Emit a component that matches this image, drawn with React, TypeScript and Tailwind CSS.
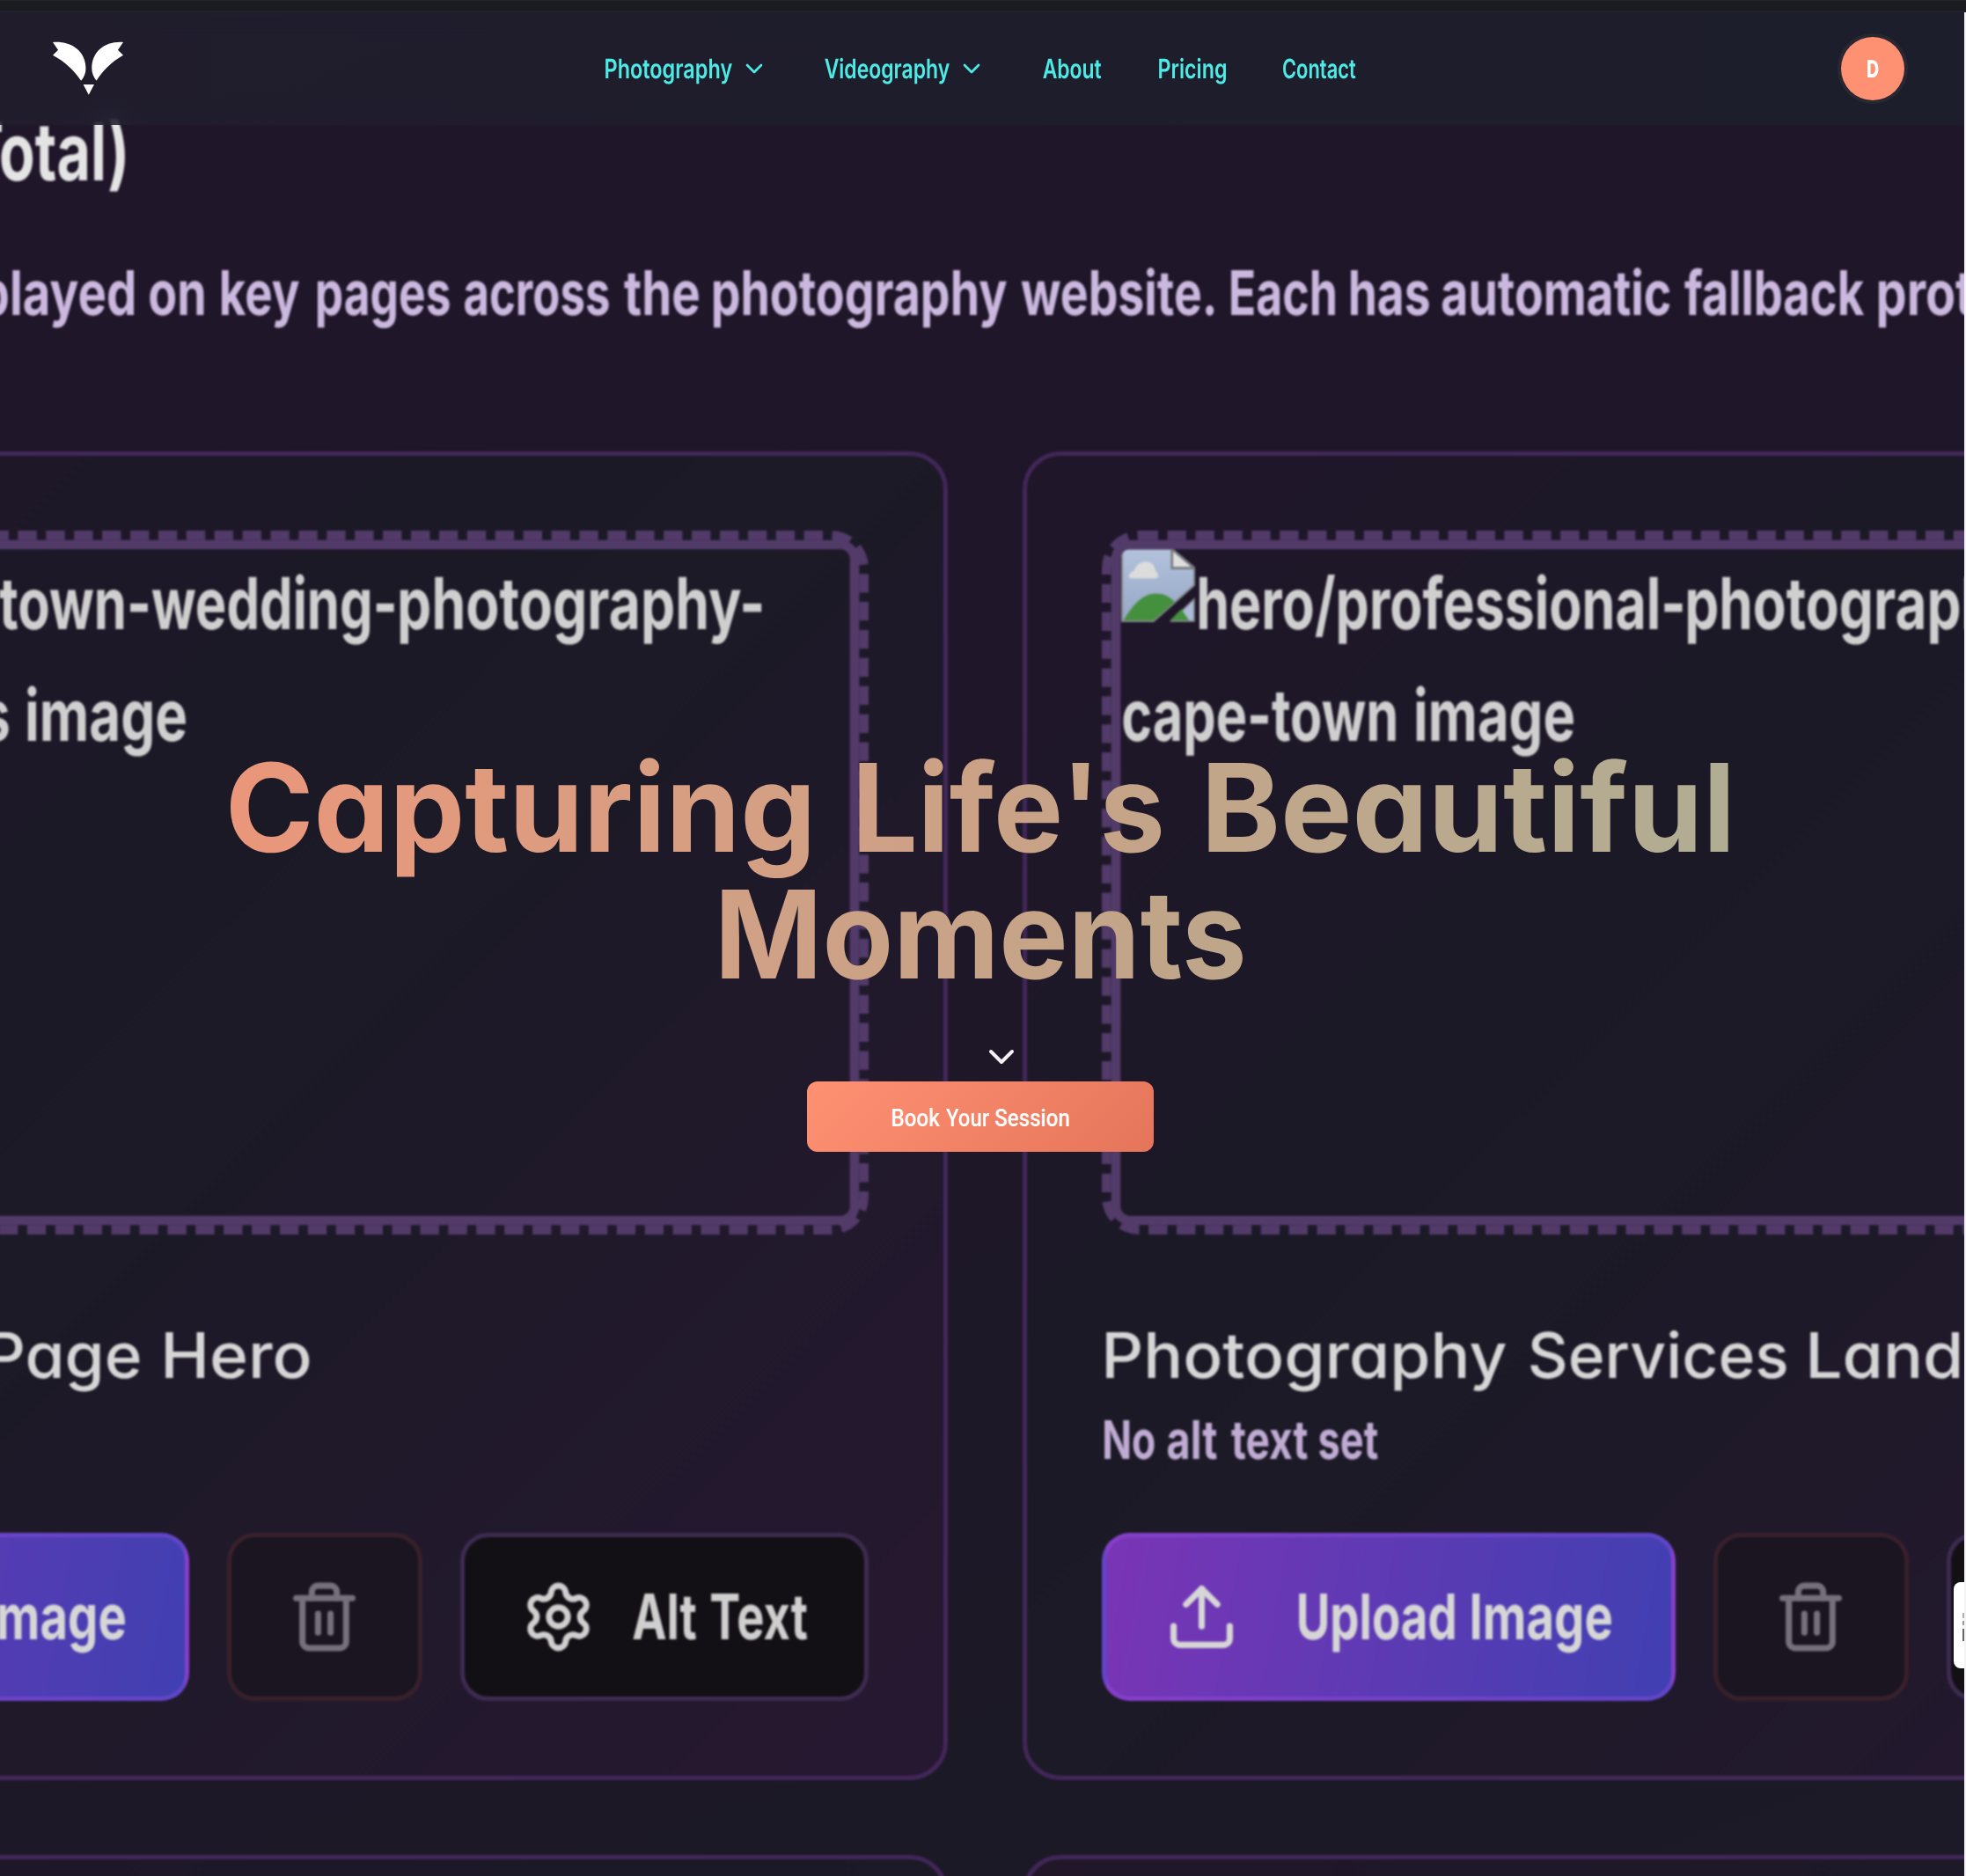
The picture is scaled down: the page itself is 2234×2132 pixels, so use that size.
import { useLayoutEffect, useRef } from "react";
import { ChevronDown, Settings, Trash2, Upload } from "lucide-react";

/** Text whose visible glyphs span exactly `w` pixels. */
function Ink({ w, text, className = "" }: { w: number; text: string; className?: string }) {
  const ref = useRef<HTMLSpanElement>(null);
  useLayoutEffect(() => {
    const el = ref.current;
    if (!el) return;
    const cs = getComputedStyle(el);
    const size = parseFloat(cs.fontSize);
    const ctx = document.createElement("canvas").getContext("2d");
    if (!ctx) return;
    ctx.font = `${cs.fontWeight} 400px ${cs.fontFamily}`;
    const m = ctx.measureText(text);
    const k = size / 400;
    const left = -m.actualBoundingBoxLeft * k;
    const right = (m.width - m.actualBoundingBoxRight) * k;
    const ink = parseFloat(cs.width) - left - right;
    const s = w / ink;
    el.style.transform = `translateX(${-left * s}px) scaleX(${s})`;
  }, [w, text]);
  return (
    <span className="block shrink-0 whitespace-pre" style={{ width: w }}>
      <span ref={ref} className={`inline-block origin-left whitespace-pre ${className}`}>
        {text}
      </span>
    </span>
  );
}

type Span = [text: string, left: number, right: number];

/** A line of words, each with its left and right edge on the page. */
function Line({ from, words, className = "" }: { from: number; words: Span[]; className?: string }) {
  return (
    <div className={`flex whitespace-nowrap ${className}`}>
      {words.map(([text, l, r], i) => (
        <div key={i} className="shrink-0" style={{ marginLeft: l - (i === 0 ? from : words[i - 1][2]) }}>
          <Ink text={text} w={r - l} />
        </div>
      ))}
    </div>
  );
}

function BrokenImage() {
  return (
    <svg viewBox="0 0 16 16" className="mt-px size-[84px] shrink-0">
      <defs>
        <linearGradient id="sky" x1="0" y1="0" x2="0" y2="1">
          <stop offset="0" stopColor="#b3c3dc" />
          <stop offset="1" stopColor="#95a6c6" />
        </linearGradient>
      </defs>
      <path d="M.2.2H11l4.8 4V8L7 15.8H.2z" fill="url(#sky)" stroke="#85878b" strokeWidth=".4" />
      <path d="M15.8 11v4.8h-5z" fill="#a9bbd8" stroke="#85878b" strokeWidth=".3" />
      <path d="M.5 15.6C3.2 11 5.5 9.8 7.6 9.8c1.5 0 2.8.6 4 1.8L7 15.6z" fill="#45903e" />
      <path d="M10.6 15.6 13 13.2l1.7 2.4z" fill="#45903e" />
      <path d="M2.2 6.5c-.8 0-.8-1 .6-1.7C3.5 3.4 4.3 2.9 5.4 2.9c1.2 0 1.9.8 2 2 .7.4.8 1.6.2 1.6z" fill="#dcdcdc" />
      <path d="M11 .2v4.1h4.8z" fill="#dedede" stroke="#77787b" strokeWidth=".5" />
    </svg>
  );
}

function Card({
  left,
  frame,
  title,
  alt,
}: {
  left: number;
  frame: Span[][];
  title: Span[];
  alt: Span[];
}) {
  const inner = left + 90;
  const media = inner + 21.5;
  return (
    <div className="w-[1604px] shrink-0 rounded-[43px] border-[5px] border-[#422759] bg-linear-[135deg] from-[#20162a] via-[#1b1a26] via-45% to-[#271831] p-[85px]">
      <div className="relative h-[801px] pt-[20.5px] pl-[21.5px]">
        <div className="absolute top-0 left-0 h-[300px] w-[534px] origin-top-left scale-[2.6667] rounded-2xl border-4 border-dashed border-[#523a69]">
          <div className="h-full rounded-lg border-4 border-[#523a69]" />
        </div>
        <div className="-mt-px text-[81.5px] leading-[127px] font-bold text-[#cfcfcf]">
          <div className="flex">
            <BrokenImage />
            <Line from={media + 84} words={frame[0]} />
          </div>
          <Line from={media} words={frame[1]} />
        </div>
      </div>
      <Line
        from={inner}
        words={title}
        className="mt-[84.5px] h-[106px] text-[71.5px] leading-[106px] font-medium text-[#d6d6d6] [font-feature-settings:'cv11']"
      />
      <Line
        from={inner}
        words={alt}
        className="-mt-[1.5px] h-[86px] text-[60.6px] leading-[86px] font-bold text-[#c0abd3]"
      />
      <div className="mt-[63px] flex h-[191px] gap-[43px] text-[71.5px] font-bold">
        <div className="flex min-w-0 flex-1 items-center rounded-[32px] border-[5px] border-[#a855f7]/30 bg-linear-[100deg] from-[#7a35b6] to-[#4040b2] pl-[66px] text-[#d6d6d6]">
          <Upload className="size-[85px] shrink-0" />
          <div className="mt-[2px] ml-[68px] flex gap-5 leading-[106px]">
            <Ink text="Upload" w={177} />
            <Ink text="Image" w={158} />
          </div>
        </div>
        <div className="flex w-[221.5px] shrink-0 items-center justify-center rounded-[32px] border-[5px] border-[#38202b] bg-[#1a1520] text-[#75707c]">
          <Trash2 className="size-[85px]" />
        </div>
        <div className="flex w-[464.5px] shrink-0 items-center rounded-[32px] border-[5px] border-[#3d2b50] bg-[#131015] pl-[64px] text-[#cfcfcf]">
          <Settings className="size-[85px] shrink-0" />
          <div className="mt-[2px] ml-[42px] flex gap-[17px] leading-[106px]">
            <Ink text="Alt" w={72.5} />
            <Ink text="Text" w={109.5} />
          </div>
        </div>
      </div>
    </div>
  );
}

const LEFT = -527;
const RIGHT = 1162;

function Backdrop() {
  return (
    <div className="absolute inset-y-0 left-0 w-[2232px] overflow-hidden bg-linear-[160deg] from-[#20162a] via-[#1e1728] to-[#1b1a26]">
      <div className="-ml-[527px] w-[3293px] pt-[108px] blur-[0.9px]">
        <Line
          from={LEFT}
          words={[["Total)", -38, 142]]}
          className="h-[128px] text-[91px] leading-[128px] font-bold text-[#e4e4e4]"
        />
        <Line
          from={LEFT}
          words={[
            ["played", -20, 152.5],
            ["on", 170, 231.5],
            ["key", 252, 340],
            ["pages", 361, 511],
            ["across", 528, 692],
            ["the", 709, 794],
            ["photography", 811, 1144],
            ["website.", 1160, 1380],
            ["Each", 1399, 1517],
            ["has", 1535, 1624],
            ["automatic", 1639, 1898],
            ["fallback", 1914, 2118],
            ["protection.", 2135, 2427],
          ]}
          className="mt-[43.5px] h-[106px] text-[70px] leading-[106px] font-bold text-[#cbb8de]"
        />
        <div className="mt-[127px] flex gap-[85px]">
          <Card
            left={LEFT}
            frame={[
              [
                ["hero/cape-", -331, -20],
                ["town-wedding-", -1, 448],
                ["photography-", 454.5, 865],
              ],
              [
                ["services", -230, 10],
                ["image", 31, 211],
              ],
            ]}
            title={[
              ["Page", -12, 158.6],
              ["Hero", 188, 351.6],
            ]}
            alt={[]}
          />
          <Card
            left={RIGHT}
            frame={[
              [
                ["hero/professional-", 1363, 1912],
                ["photography-", 1918, 2326],
              ],
              [
                ["cape-town", 1276.3, 1586],
                ["image", 1609, 1788],
              ],
            ]}
            title={[
              ["Photography", 1257, 1711.5],
              ["Services", 1739, 2030],
              ["Land", 2057, 2226],
            ]}
            alt={[
              ["No", 1254.7, 1311.5],
              ["alt", 1327, 1383],
              ["text", 1398.6, 1485.6],
              ["set", 1499, 1566],
            ]}
          />
        </div>
        <div className="mt-[85px] flex h-64 gap-[85px]">
          <div className="w-[1604px] shrink-0 rounded-[43px] border-[5px] border-[#422759] bg-linear-to-r from-[#20162a] to-[#1b1a26]" />
          <div className="w-[1604px] shrink-0 rounded-[43px] border-[5px] border-[#422759] bg-linear-to-r from-[#211729] to-[#1b1a26]" />
        </div>
      </div>
    </div>
  );
}

function Logo() {
  return (
    <svg viewBox="0 0 80 60" className="h-[60px] w-20 overflow-visible" fill="#fff">
      <path d="M0 0C20-1.5 37.5 9 37.5 30C37.5 35 35.5 40 32.1 43.7C25 33 14 22 0 14.7L6 8.7Z" />
      <path d="M80 0C60-1.5 44.3 10 44.3 30C44.3 35 46.5 40 49.6 43.7C56 33 67 22 80 14.7L74 8.7Z" />
      <path d="M34.6 48H47L40.8 59.7Z" />
    </svg>
  );
}

function Header() {
  return (
    <header className="relative z-20">
      <div className="h-3 border-t border-[#232429] bg-[#1b1c1f]" />
      <div className="h-0.5 bg-[#22222b]" />
      <div className="mr-0.5 flex h-32 items-center bg-linear-to-r from-[#201f2e]/75 to-[#1d212c]/75 pl-[60px] backdrop-blur-md">
        <div className="w-[627.5px]">
          <Logo />
        </div>
        <nav className="mt-0.5 flex items-center text-[30.5px] leading-none font-semibold text-[#4eeae5]">
          <Ink text="Photography" w={144} />
          <ChevronDown className="-mt-0.5 ml-[9.5px] size-8" />
          <div className="ml-[63.5px] flex items-center">
            <Ink text="Videography" w={142} />
            <ChevronDown className="-mt-0.5 ml-[9px] size-8" />
          </div>
          <div className="ml-[65px] flex gap-[65.5px]">
            <Ink text="About" w={66.5} />
            <Ink text="Pricing" w={76} />
            <Ink text="Contact" w={82.5} />
          </div>
        </nav>
        <div className="mr-[64px] ml-auto flex size-20 items-center justify-center rounded-full bg-[#2b2732]">
          <div className="flex size-[72px] items-center justify-center rounded-full bg-[#ff9173] text-[27px] leading-none font-extrabold text-white">
            <Ink text="D" w={12.5} />
          </div>
        </div>
      </div>
    </header>
  );
}

const glyphs = "bg-clip-text text-transparent bg-linear-to-r py-8 -my-8";

function Hero() {
  return (
    <section className="relative z-10 flex flex-col">
      <h1 className="mt-[704px] text-[139px] leading-[144px] font-bold [font-feature-settings:'cv11']">
        <span className="flex pl-[260px]">
          <Ink text="Capturing" w={660} className={`${glyphs} from-[#ea967a] to-[#d2a084]`} />
          <span className="w-14" />
          <Ink text="Life's" w={344} className={`${glyphs} from-[#d0a085] to-[#c3a488]`} />
          <span className="w-[53px]" />
          <Ink text="Beautiful" w={592} className={`${glyphs} from-[#c2a589] to-[#b0ad93]`} />
        </span>
        <span className="flex pl-[820px]">
          <Ink text="Moments" w={593} className={`${glyphs} from-[#d1a085] to-[#bda68a]`} />
        </span>
      </h1>
      <div className="mt-[43px] ml-[1114px] h-12 w-12 text-[#f2f0f2]">
        <ChevronDown className="size-12" />
      </div>
      <button className="mt-[4px] ml-[917px] flex h-20 w-[394px] items-center justify-center gap-[7px] rounded-xl bg-linear-[135deg] from-[#ff9173] to-[#e5755a] pt-[3px] font-['Roboto',sans-serif] text-[28px] leading-none font-medium text-white">
        <Ink text="Book" w={54} />
        <Ink text="Your" w={49} />
        <Ink text="Session" w={83.5} />
      </button>
    </section>
  );
}

function EdgeWidget() {
  return (
    <>
      <div className="absolute top-3.5 right-0 bottom-0 z-20 w-0.5 bg-[#f4f4f4]" />
      <div className="absolute top-[1798px] right-0.5 z-30 h-[98px] w-3 overflow-hidden rounded-l-lg bg-white pt-[35px]">
        <div className="ml-auto h-1.5 w-0.5 -skew-y-12 bg-[#b0b0b0]" />
        <div className="mt-[3px] ml-auto h-[5px] w-0.5 -skew-y-12 bg-[#999]" />
        <div className="mt-[4px] ml-auto h-[14px] w-0.5 bg-[#666]" />
      </div>
    </>
  );
}

export default function App() {
  return (
    <main className="relative h-[2132px] w-[2234px] overflow-hidden bg-[#1e1728] font-['Inter',sans-serif] [text-rendering:geometricPrecision]">
      <Backdrop />
      <Header />
      <Hero />
      <EdgeWidget />
    </main>
  );
}
